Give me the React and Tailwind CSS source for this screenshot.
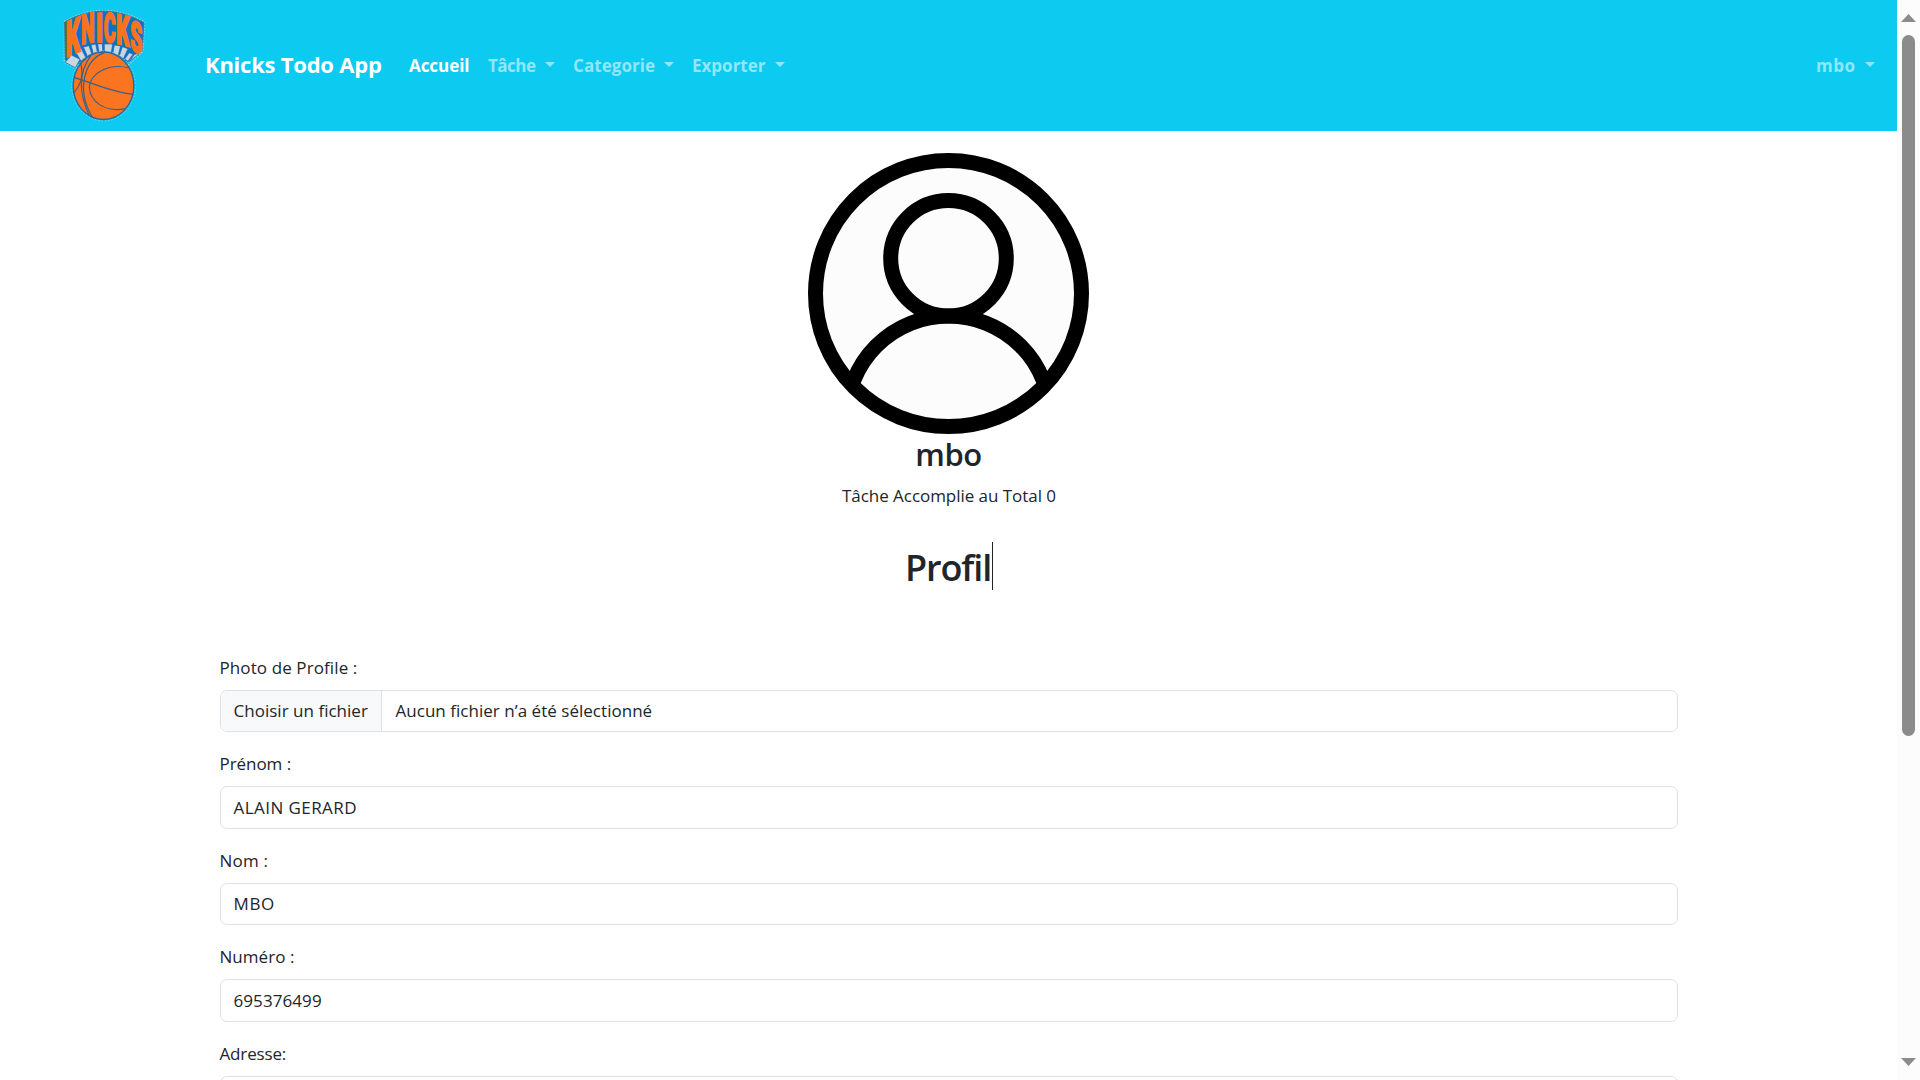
import React from 'react';

const LETTERS = [
  { c: 'K', t: 'matrix(0.68 -0.28 0 1.46 77 171)' },
  { c: 'N', t: 'matrix(0.58 -0.11 0 1.24 123 133)' },
  { c: 'I', t: 'matrix(0.7 -0.04 0 1.2 168 126)' },
  { c: 'C', t: 'matrix(0.54 0.04 0 1.22 191 125)' },
  { c: 'K', t: 'matrix(0.62 0.16 0 1.24 229 130)' },
  { c: 'S', t: 'matrix(0.58 0.22 0 1.26 271 149)' },
];

function Logo() {
  return (
    <svg viewBox="0 0 390 393" className="h-[131px] w-[130px] shrink-0">
      <path
        d="M74 64Q190 -2 314 66L308 154L278 184L255 205H118L104 203L73 187Z"
        fill="none"
        stroke="#8fd0dc"
        strokeWidth="5"
        strokeDasharray="4 5"
      />
      <path d="M74 66Q190 0 312 68L306 153L284 166L262 186Q190 120 118 190L76 180Z" fill="#0e72c4" stroke="#4a6f86" strokeWidth="3" />
      <g fill="#c9d6de" stroke="#0e6dbb" strokeWidth="2">
        <path d="M94 165L120 178L106 203L76 187Z" />
        <path d="M104 151L124 146L137 172L123 183Z" />
        <path d="M130 141L147 137L155 161L142 168Z" />
        <path d="M153 135L167 132L172 156L160 160Z" />
        <path d="M173 132L187 131L188 154L177 156Z" />
        <path d="M193 132H218L214 157L193 154Z" />
        <path d="M223 135L242 138L234 167L219 159Z" />
        <path d="M247 140L264 146L250 176L238 168Z" />
        <path d="M268 158L279 163L264 184L254 177Z" />
        <path d="M284 163L300 160L268 184Z" />
      </g>
      <g fill="#f9721c" stroke="#f9721c" strokeWidth="5" fontFamily="Roboto" fontWeight="900" fontSize="100">
        {LETTERS.map((l, i) => (
          <text key={i} transform={l.t}>{l.c}</text>
        ))}
      </g>
      <ellipse cx="191" cy="258" rx="96" ry="105" fill="none" stroke="#8fd0dc" strokeWidth="3" strokeDasharray="4 6" />
      <ellipse cx="190.500" cy="257.500" rx="91" ry="101" fill="#fb7420" stroke="#2d659f" strokeWidth="4" />
      <g fill="none" stroke="#37618c" strokeWidth="3.500">
        <path d="M102 232Q150 248 190 262Q240 278 280 283" />
        <path d="M122 189Q135 240 103 277" />
        <path d="M153 166Q98 240 148 347" />
        <path d="M194 157C132 180 108 270 157 352" />
        <path d="M267 204C205 188 150 220 148 262C150 305 195 338 256 326" />
      </g>
    </svg>
  );
}

function Caret() {
  return <span className="mb-[3px] h-0 w-0 border-x-[5px] border-t-[5px] border-x-transparent border-t-current" />;
}

function NavDrop({ children, className }) {
  return (
    <a className={`flex items-center justify-between text-[#92e6f9] ${className}`}>
      <span>{children}</span>
      <Caret />
    </a>
  );
}

function Header() {
  return (
    <header className="flex h-[131px] items-center bg-[#0dcaf0] pl-10 text-[17px] leading-[27px] font-bold text-white">
      <Logo />
      <a className="ml-[35px] w-[204px] pb-[3px] text-[22px] leading-[33px] tracking-[-0.23px]">Knicks Todo App</a>
      <a className="w-[79px] tracking-[-0.05px]">Accueil</a>
      <NavDrop className="w-[67px] tracking-[-0.5px]">Tâche</NavDrop>
      <NavDrop className="ml-[18px] w-[101px] tracking-[0.05px]">Categorie</NavDrop>
      <NavDrop className="ml-[18px] w-[93px]">Exporter</NavDrop>
      <NavDrop className="mr-[22px] ml-auto w-[59px] tracking-[0.5px]">mbo</NavDrop>
    </header>
  );
}

function Avatar() {
  return (
    <svg viewBox="0 0 281 281" className="h-[281px] w-[281px]" fill="none" stroke="#000" strokeWidth="15">
      <defs>
        <clipPath id="disc">
          <circle cx="140.500" cy="140.500" r="138" />
        </clipPath>
      </defs>
      <circle cx="140.500" cy="140.500" r="133" fill="#fcfcfc" />
      <circle cx="140.500" cy="105.300" r="57.800" />
      <circle cx="140.500" cy="265" r="102" clipPath="url(#disc)" />
    </svg>
  );
}

function Field({ label, labelClass, rowClass = '', children }) {
  return (
    <div className="mb-[18px]">
      <label className={`mb-[9px] block h-[27px] ${labelClass}`}>{label}</label>
      <div className={`flex h-[42.5px] items-center overflow-hidden rounded-[7px] border border-[#dee2e6] bg-white ${rowClass}`}>{children}</div>
    </div>
  );
}

function Scrollbar() {
  return (
    <div className="flex h-full w-[23px] shrink-0 flex-col items-center bg-[#fcfcfc] pt-[14px] pb-[14px]">
      <svg viewBox="0 0 15 8" className="h-2 w-[15px] shrink-0" fill="#8b8b8b"><path d="M0 8L7.500 0L15 8Z" /></svg>
      <div className="mt-[13px] h-[701px] w-[13px] rounded-full bg-[#8b8b8b]" />
      <svg viewBox="0 0 15 8" className="mt-auto h-2 w-[15px] shrink-0" fill="#8b8b8b"><path d="M0 0H15L7.500 8Z" /></svg>
    </div>
  );
}

export default function App() {
  return (
    <div className="flex h-screen overflow-hidden bg-white font-['Open_Sans',sans-serif] text-[17px] leading-[27px] text-[#212529]">
      <div className="h-full min-w-0 flex-1 overflow-hidden">
        <Header />
        <section className="flex flex-col items-center pt-[22px]">
          <Avatar />
          <h3 className="mt-px h-[38px] text-[31px] leading-[38px] font-semibold tracking-[-0.5px]">mbo</h3>
          <p className="mt-[9px] pl-px tracking-[-0.04px]">Tâche Accomplie au Total 0</p>
          <h2 className="mt-[33px] h-12 w-[89px] border-r border-[#212529] pt-[2px] pl-px text-[36px] leading-[48px] font-semibold tracking-[-1.1px]">Profil</h2>
        </section>
        <form className="mx-auto mt-[63.8px] w-[1458px]">
          <Field label="Photo de Profile :" labelClass="tracking-[0.1px]" rowClass="[&>*]:pb-[2px]">
            <span className="flex h-full w-[161px] items-center border-r border-[#dee2e6] bg-[#f8f9fa] pl-[13px] tracking-[0.02px]">Choisir un fichier</span>
            <span className="pl-[14px] tracking-[0.03px]">Aucun fichier n’a été sélectionné</span>
          </Field>
          <Field label="Prénom :" labelClass="tracking-[-0.05px]">
            <span className="pl-[13px] tracking-[0.44px]">ALAIN GERARD</span>
          </Field>
          <Field label="Nom :" labelClass="tracking-[0.2px]" rowClass="[&>*]:pb-[2px]">
            <span className="pl-[13px] tracking-[0.6px]">MBO</span>
          </Field>
          <Field label="Numéro :" labelClass="tracking-[0.05px]">
            <span className="pl-[13px] tracking-[0.08px]">695376499</span>
          </Field>
          <Field label="Adresse:" labelClass="tracking-[-0.15px]" />
        </form>
      </div>
      <Scrollbar />
    </div>
  );
}
